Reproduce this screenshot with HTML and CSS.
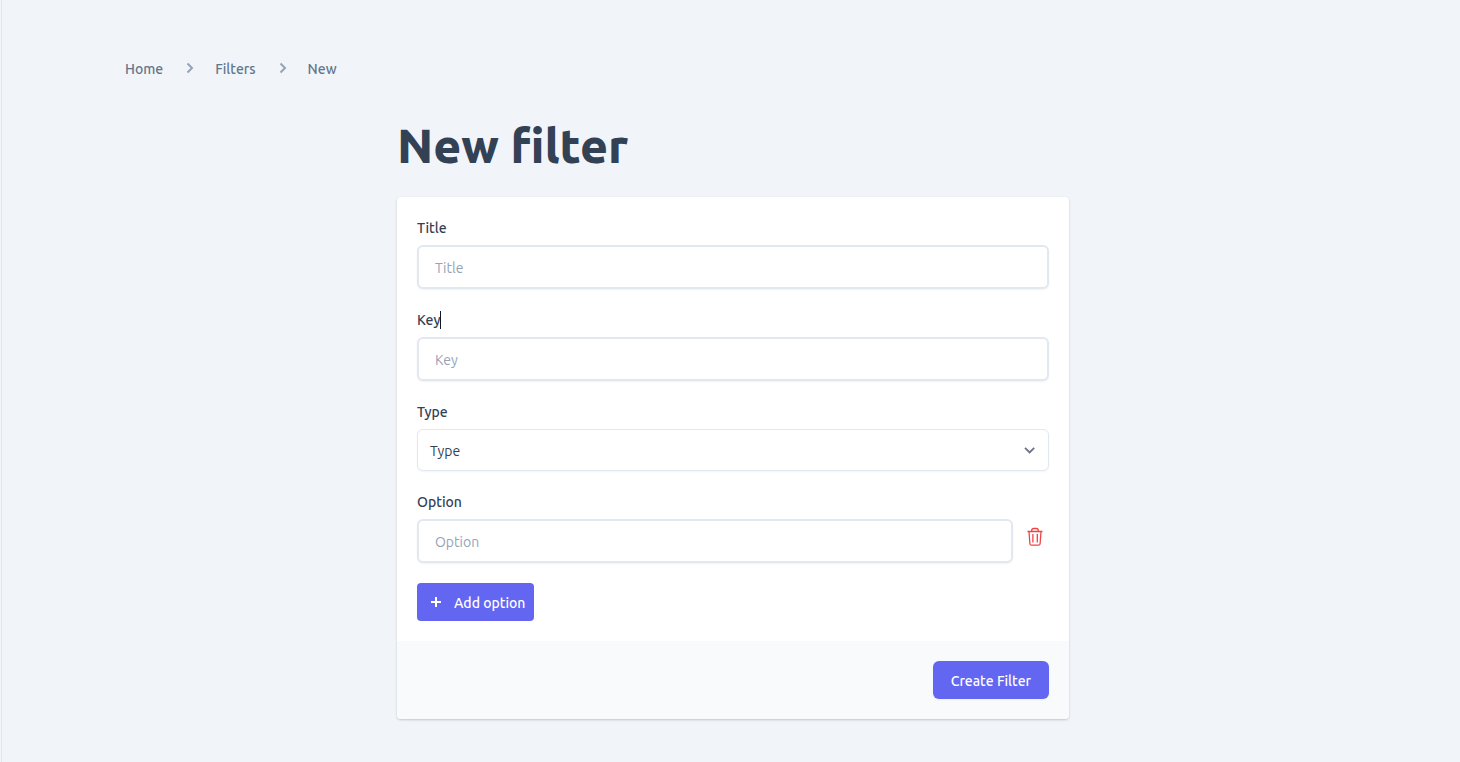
FILE: index.html
```html
<!DOCTYPE html>
<html lang="en">
<head>
<meta charset="utf-8">
<meta name="viewport" content="width=device-width, initial-scale=1">
<title>New filter</title>
<link rel="stylesheet" href="styles.css">
</head>
<body>
<main class="page">
  <div class="container">
    <nav class="breadcrumb" aria-label="Breadcrumb">
      <a href="#">Home</a>
      <svg class="chevron" viewBox="0 0 20 20" aria-hidden="true"><path d="M8.500 4.500 13 9l-4.500 4.500"/></svg>
      <a href="#">Filters</a>
      <svg class="chevron" viewBox="0 0 20 20" aria-hidden="true"><path d="M8.500 4.500 13 9l-4.500 4.500"/></svg>
      <a href="#" aria-current="page">New</a>
    </nav>
    <div class="content">
      <h1 class="heading">New filter</h1>
      <form class="card">
        <div class="card-body">
          <div class="field">
            <label for="title">Title</label>
            <input class="text-input" id="title" type="text" placeholder="Title">
          </div>
          <div class="field">
            <label for="key">Key<span class="caret"></span></label>
            <input class="text-input" id="key" type="text" placeholder="Key">
          </div>
          <div class="field">
            <label for="type">Type</label>
            <div class="select-wrap">
              <select class="select" id="type"><option>Type</option></select>
              <svg class="select-arrow" viewBox="0 0 20 20" aria-hidden="true"><path d="m5 7.800 4.600 4.600 4.600-4.600"/></svg>
            </div>
          </div>
          <div class="field">
            <label for="option">Option</label>
            <div class="option-row">
              <input class="text-input" id="option" type="text" placeholder="Option">
              <button class="delete" type="button" aria-label="Delete option">
                <svg viewBox="0 0 20 20" aria-hidden="true"><path d="M2.500 4.500h15M4 4.500l.9 12.200q.1 1.500 1.600 1.500h7q1.500 0 1.600-1.500L16 4.500M6.700 4.300V3.500q0-2 2-2h2.600q2 0 2 2v.8M7.900 7v8.500M12.300 7v8.500"/></svg>
              </button>
            </div>
          </div>
          <button class="button add" type="button">
            <svg viewBox="0 0 20 20" aria-hidden="true"><path d="M10 5v10M5 10h10"/></svg>
            <span>Add option</span>
          </button>
        </div>
        <div class="card-footer">
          <button class="button submit" type="submit">Create Filter</button>
        </div>
      </form>
    </div>
  </div>
</main>
</body>
</html>
```
FILE: styles.css
```css
*, *::before, *::after { box-sizing: border-box; }

body {
  margin: 0;
  background: #f1f5f9;
  color: #334155;
  font: 14px/20px Ubuntu, "Noto Sans", "Open Sans", sans-serif;
}

button, input, select { font: inherit; color: inherit; margin: 0; }
svg { display: block; fill: none; stroke: currentColor; }

.page {
  min-height: 100vh;
  margin-left: 1px;
  padding: 59px 0 43px 4px;
  border-left: 1px solid #e2e8f0;
}

.container { max-width: 1216px; margin: 0 auto; }

.breadcrumb { display: flex; align-items: center; gap: 16px; font-weight: 500; }
.breadcrumb a { color: #64748b; text-decoration: none; }
.chevron { width: 20px; height: 20px; color: #94a3b8; stroke-width: 2; }

.content { max-width: 672px; margin: 42px auto 0; }
.heading { margin: 0 0 28px; font-size: 48px; line-height: 48px; font-weight: 800; }

.card {
  overflow: hidden;
  border-radius: 4px;
  background: #fff;
  box-shadow: 0 1px 3px rgba(0, 0, 0, .1), 0 1px 2px rgba(0, 0, 0, .1);
}
.card-body { display: flex; flex-direction: column; gap: 20px; padding: 20px; }
.card-footer { display: flex; justify-content: flex-end; padding: 20px; background: #f8fafc; }

.field { display: flex; flex-direction: column; gap: 8px; }
.field label { height: 20px; padding-top: 1px; font-weight: 500; }

.caret {
  display: inline-block;
  width: 1px;
  height: 18px;
  margin-top: -2px;
  background: #0f172a;
  vertical-align: middle;
}

.text-input {
  width: 100%;
  height: 44px;
  padding: 2px 16px 0;
  border: 2px solid #e2e8f0;
  border-radius: 6px;
  background: #fff;
  box-shadow: 0 1px 2px rgba(0, 0, 0, .05);
}
.text-input::placeholder { color: #94a3b8; opacity: 1; }

.select-wrap { display: grid; align-items: center; }
.select-wrap > * { grid-area: 1 / 1; }
.select {
  width: 100%;
  height: 42px;
  padding: 1px 40px 0 12px;
  border: 1px solid #e2e8f0;
  border-radius: 6px;
  background: #fff;
  box-shadow: 0 1px 2px rgba(0, 0, 0, .05);
  appearance: none;
}
.select-arrow {
  width: 20px;
  height: 20px;
  margin-right: 9px;
  justify-self: end;
  color: #6b7280;
  stroke-width: 1.8;
  pointer-events: none;
}

.option-row { display: flex; gap: 12px; }
.delete {
  flex: none;
  width: 20px;
  height: 20px;
  margin: 8px 4px 0 0;
  padding: 0;
  border: 0;
  background: none;
  color: #ef4444;
}
.delete svg { width: 20px; height: 20px; stroke-width: 1.3; }

.button {
  display: flex;
  align-items: center;
  height: 38px;
  border: 0;
  background: #6366f1;
  color: #fff;
  font-weight: 500;
}
.add { align-self: flex-start; gap: 8px; padding: 0 9px; border-radius: 4px; }
.add span { padding-top: 2px; }
.add svg { width: 20px; height: 20px; stroke-width: 2; }
.submit { padding: 1px 18px 0; border-radius: 6px; box-shadow: 0 1px 2px rgba(0, 0, 0, .05); }
```
